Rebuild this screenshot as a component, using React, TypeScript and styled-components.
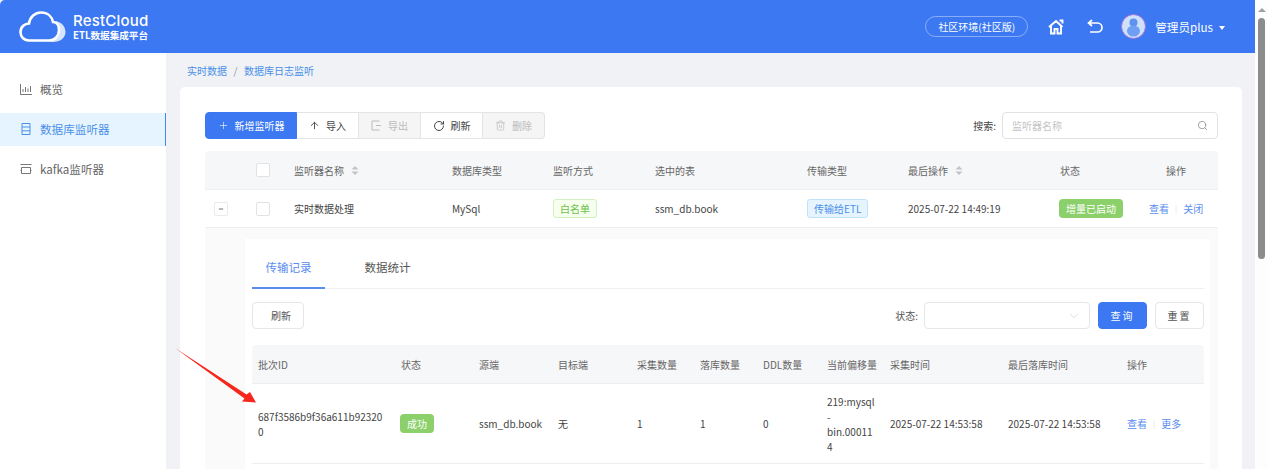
import React from 'react';
import styled, { createGlobalStyle } from 'styled-components';
import { ChevronDown, Minus, Plus, RotateCw, Search, ArrowUp, Trash2 } from 'lucide-react';

const GlobalStyle = createGlobalStyle`
  html, body {
    margin: 0;
    height: 469px;
    overflow: hidden;
    background: #f0f2f5;
    font-family: "Noto Sans CJK SC", "Noto Sans", sans-serif;
    color: #555;
  }
  * { box-sizing: border-box; }
`;

const Page = styled.div`
  display: flex;
  width: 1268px;
  height: 469px;
  overflow: hidden;
`;

const Main = styled.div`
  width: 1255px;
  display: flex;
  flex-direction: column;
`;

const Header = styled.header`
  height: 53px;
  flex: none;
  background: #3b78f2;
  border-top-left-radius: 5px;
  display: flex;
  align-items: center;
  padding: 0 30px 0 19px;
  color: #fff;
`;

const Logo = styled.div`
  display: flex;
  align-items: center;
  gap: 7px;
`;

const LogoText = styled.div`
  display: flex;
  flex-direction: column;
  margin-top: -1px;
`;

const LogoName = styled.div`
  font-family: "Inter", sans-serif;
  font-size: 15px;
  line-height: 18px;
  font-weight: 500;
  letter-spacing: 0.2px;
`;

const LogoSub = styled.div`
  font-size: 9.6px;
  line-height: 11px;
  font-weight: 700;
  white-space: nowrap;
`;

const HeaderRight = styled.div`
  margin-left: auto;
  display: flex;
  align-items: center;
`;

const EnvPill = styled.div`
  width: 103px;
  height: 21px;
  border: 1px solid rgba(255, 255, 255, 0.4);
  border-radius: 11px;
  font-size: 10px;
  line-height: 19px;
  text-align: center;
  margin-right: 20px;
`;

const HomeIcon = styled.svg`
  display: block;
  color: #fff;
  margin-right: 23px;
`;

const BackIcon = styled.svg`
  display: block;
  color: #fff;
  margin-right: 18px;
`;

const Avatar = styled.div`
  width: 25px;
  height: 25px;
  border-radius: 50%;
  border: 1px solid #9a70d8;
  background: #cfe0fb;
  margin: 0 9px 0 0;
  overflow: hidden;
`;

const UserName = styled.span`
  font-size: 11.6px;
  white-space: nowrap;
`;

const Caret = styled.span`
  width: 0;
  height: 0;
  margin-left: 6px;
  margin-top: 2px;
  border-left: 3.5px solid transparent;
  border-right: 3.5px solid transparent;
  border-top: 4px solid #fff;
`;

const Body = styled.div`
  flex: 1;
  display: flex;
  min-height: 0;
`;

const Sidebar = styled.nav`
  width: 166px;
  flex: none;
  background: #fff;
  padding-top: 20px;
`;

const NavItem = styled.div<{ $active?: boolean }>`
  height: 33px;
  margin-bottom: 7px;
  display: flex;
  align-items: center;
  gap: 8px;
  padding: 0 0 2px 20px;
  font-size: 11.6px;
  color: ${(p) => (p.$active ? '#4a90e8' : '#666')};
  background: ${(p) => (p.$active ? '#e6f4ff' : 'transparent')};
  border-right: ${(p) => (p.$active ? '1.5px solid #3f8ce8' : 'none')};
`;

const Content = styled.main`
  flex: 1;
  min-width: 0;
  padding: 0 13px 0 14px;
`;

const Crumbs = styled.div`
  height: 34px;
  display: flex;
  align-items: center;
  font-size: 10px;
  color: #4a90e8;
  padding: 0 0 0 7px;
`;

const CrumbSep = styled.span`
  color: #999;
  margin: 0 6.5px;
`;

const Card = styled.section`
  background: #fff;
  border-radius: 5px 5px 0 0;
  padding: 25px 24px 0 25px;
  height: 400px;
  overflow: hidden;
`;

const Toolbar = styled.div`
  display: flex;
  align-items: center;
  height: 27px;
  margin-bottom: 12px;
`;

const BtnGroup = styled.div`
  display: flex;
  height: 27px;
`;

const GroupBtn = styled.div<{ $kind?: 'primary' | 'off'; $w: number }>`
  width: ${(p) => p.$w}px;
  height: 27px;
  display: flex;
  align-items: center;
  justify-content: center;
  gap: 6px;
  font-size: 10px;
  white-space: nowrap;
  border: 1px solid ${(p) => (p.$kind === 'primary' ? '#3b78f2' : '#e2e4e8')};
  border-left-width: ${(p) => (p.$kind === 'primary' ? '1px' : '0')};
  background: ${(p) => (p.$kind === 'primary' ? '#3b78f2' : p.$kind === 'off' ? '#f5f5f5' : '#fff')};
  color: ${(p) => (p.$kind === 'primary' ? '#fff' : p.$kind === 'off' ? '#bbb' : '#444')};
  &:first-child { border-radius: 4px 0 0 4px; }
  &:last-child { border-radius: 0 4px 4px 0; }
`;

const SearchBox = styled.div`
  margin-left: auto;
  display: flex;
  align-items: center;
  font-size: 10px;
  color: #444;
`;

const SearchInput = styled.div`
  width: 216px;
  height: 27px;
  margin-left: 6px;
  border: 1px solid #e0e2e6;
  border-radius: 4px;
  display: flex;
  align-items: center;
  justify-content: space-between;
  padding: 0 9px;
  color: #c4c4c4;
`;

const Row = styled.div<{ $cols: string; $head?: boolean; $h: number; $inset?: boolean }>`
  display: grid;
  grid-template-columns: ${(p) => p.$cols};
  align-items: center;
  height: ${(p) => p.$h}px;
  padding-left: ${(p) => (p.$inset ? '6px' : '0')};
  font-size: 10px;
  color: ${(p) => (p.$head ? '#666' : '#444')};
  background: ${(p) => (p.$head ? '#f6f7f9' : '#fff')};
  border-bottom: 1px solid #eceef1;
  border-radius: ${(p) => (p.$head ? '4px 4px 0 0' : '0')};
`;

const Cell = styled.div`
  white-space: nowrap;
  display: flex;
  align-items: center;
`;

const CheckCell = styled(Cell)`
  padding-left: 51px;
`;

const ActionCell = styled(Cell)`
  margin-left: -17px;
`;

const WrapCell = styled.div<{ $w: number }>`
  width: ${(p) => p.$w}px;
  overflow-wrap: anywhere;
  line-height: 15px;
`;

const Check = styled.span<{ $gap?: number }>`
  display: block;
  width: 14px;
  height: 14px;
  margin-left: ${(p) => p.$gap ?? 0}px;
  background: #fff;
  border: 1px solid #e0e2e6;
  border-radius: 2px;
`;

const Expander = styled.span`
  display: flex;
  align-items: center;
  justify-content: center;
  width: 14px;
  height: 14px;
  border: 1px solid #e8eaee;
  border-radius: 2px;
  background: #fff;
  margin-left: 9px;
  color: #444;
`;

const SortIcon = styled.svg`
  margin-left: 7px;
  color: #c2c4c8;
`;

const Tag = styled.span<{ $tone: 'green' | 'blue' }>`
  height: 19px;
  padding: 0 6px;
  display: inline-flex;
  align-items: center;
  border-radius: 3px;
  border: 1px solid ${(p) => (p.$tone === 'green' ? '#d3f1c0' : '#bfe2fd')};
  background: ${(p) => (p.$tone === 'green' ? '#f6ffed' : '#e6f4ff')};
  color: ${(p) => (p.$tone === 'green' ? '#6cc04a' : '#4a90e8')};
`;

const Badge = styled.span`
  height: 19px;
  margin-left: -1px;
  padding: 0 7px;
  display: inline-flex;
  align-items: center;
  border-radius: 4px;
  background: #8bd06a;
  color: #fff;
`;

const Link = styled.span`
  color: #5a8df0;
`;

const LinkSep = styled.span`
  color: #e2e2e2;
  margin: 0 6px;
  font-size: 8px;
`;

const Expanded = styled.div`
  background: #fafafa;
  padding: 11px 8px 0 40px;
  height: 260px;
`;

const Inner = styled.div`
  background: #fff;
  height: 240px;
  padding: 0 6px 0 7px;
`;

const Tabs = styled.div`
  display: flex;
  height: 50px;
  border-bottom: 1px solid #eeeff2;
  margin: 0 0 13px 0;
`;

const Tab = styled.div<{ $on?: boolean }>`
  width: 73px;
  margin-right: 26px;
  text-align: center;
  line-height: 57px;
  height: 50px;
  font-size: 11.5px;
  color: ${(p) => (p.$on ? '#5a8df0' : '#555')};
  border-bottom: ${(p) => (p.$on ? '2px solid #5a8df0' : 'none')};
`;

const FilterBar = styled.div`
  display: flex;
  align-items: center;
  height: 27px;
  margin-bottom: 16px;
`;

const PlainBtn = styled.div<{ $w: number }>`
  width: ${(p) => p.$w}px;
  height: 27px;
  border: 1px solid #e4e6ea;
  border-radius: 4px;
  display: flex;
  align-items: center;
  justify-content: center;
  padding-left: ${(p) => (p.$w < 50 ? '0' : '6px')};
  font-size: 10px;
  color: #555;
  letter-spacing: ${(p) => (p.$w < 50 ? '2px' : '0')};
`;

const PrimaryBtn = styled(PlainBtn)`
  background: #3b78f2;
  border-color: #3b78f2;
  color: #fff;
  margin: 0 8px;
`;

const FilterLabel = styled.span`
  margin-left: auto;
  font-size: 10px;
  color: #555;
  margin-right: 6px;
`;

const SelectBox = styled.div`
  width: 166px;
  height: 27px;
  border: 1px solid #e4e6ea;
  border-radius: 4px;
  display: flex;
  align-items: center;
  justify-content: flex-end;
  padding-right: 8px;
  color: #c4c4c4;
`;

const Scrollbar = styled.div`
  width: 13px;
  flex: none;
  background: #fdfdfd;
  padding: 6px 2px 0;
`;

const ScrollUp = styled.div`
  width: 0;
  height: 0;
  margin: 2px auto 6px;
  border-left: 4px solid transparent;
  border-right: 4px solid transparent;
  border-bottom: 4px solid #a0a0a0;
`;

const ScrollThumb = styled.div`
  width: 7px;
  height: 241px;
  margin: 0 auto;
  border-radius: 4px;
  background: #8c8c8c;
`;

const Arrow = styled.svg`
  position: absolute;
  left: 172px;
  top: 345px;
`;

const Root = styled.div`
  position: relative;
`;

const topCols = '89px 158px 101px 102px 152px 101px 152px 106px 52px';
const subCols = '143px 78px 79px 79px 63px 63px 64px 63px 118px 119px 1fr';

const Sort = () => (
  <SortIcon width="8" height="11" viewBox="0 0 8 11">
    <path d="M4 1 7.5 4.5H.5zM4 10 .5 6.5h7z" fill="currentColor" />
  </SortIcon>
);

export default function App() {
  return (
    <Root>
      <GlobalStyle />
      <Page>
        <Main>
          <Header>
            <Logo>
              <svg width="47" height="32" viewBox="0 0 47 32" fill="none">
                <path d="M36 10C43 11 46.500 16 46.500 21C46.500 27 41 31 34 31L30 31C37 30 41 25 41 19C41 15 39 12 36 10Z" fill="rgba(255,255,255,.8)" />
                <path d="M10 29.500C4.500 29.500 1.500 25.500 1.500 21C1.500 15.500 6 12.500 10 12.500C11 6 16 1.500 22 1.500C29 1.500 33 6 34 11C38 11 40 15 40 19C40 25 36 29.500 30 29.500Z" fill="#3b78f2" stroke="#fff" strokeWidth="2.6" />
              </svg>
              <LogoText>
                <LogoName>RestCloud</LogoName>
                <LogoSub>ETL数据集成平台</LogoSub>
              </LogoText>
            </Logo>
            <HeaderRight>
              <EnvPill>社区环境(社区版)</EnvPill>
              <HomeIcon width="16" height="16" viewBox="0 0 16 16" fill="none" stroke="currentColor" strokeWidth="1.9">
                <path d="M1 8 8 2l6.500 6M3 7v7.500h3.500V10h3v4.500H13V7M11.500 1.500h3v3" />
              </HomeIcon>
              <BackIcon width="16" height="15" viewBox="0 0 16 15" fill="none" stroke="currentColor" strokeWidth="1.7">
                <path d="M5 1 1.500 4 5 7M2 4h8.500a4.300 4.300 0 0 1 0 9H3" />
              </BackIcon>
              <Avatar>
                <svg width="23" height="23" viewBox="0 0 23 23">
                  <circle cx="11.500" cy="7.500" r="4" fill="#5d93ee" />
                  <ellipse cx="11.500" cy="16" rx="6.500" ry="5.500" fill="#6f9ff2" />
                </svg>
              </Avatar>
              <UserName>管理员plus</UserName>
              <Caret />
            </HeaderRight>
          </Header>
          <Body>
            <Sidebar>
              <NavItem>
                <svg width="12" height="12" viewBox="0 0 12 12" fill="none" stroke="#777" strokeWidth="1">
                  <path d="M.5 1v10.500H12M3 9V6M5.500 9V4M8 9V5.500M10.500 9V3" />
                </svg>
                概览
              </NavItem>
              <NavItem $active>
                <svg width="12" height="12" viewBox="0 0 12 12" fill="none" stroke="#4a90e8" strokeWidth="1">
                  <path d="M2 .5h8v11H2zM2 4h8M2 7.800h8" />
                </svg>
                数据库监听器
              </NavItem>
              <NavItem>
                <svg width="12" height="12" viewBox="0 0 12 12" fill="none" stroke="#777" strokeWidth="1">
                  <path d="M.5 1.500h11M1.500 4.500h9v6h-9zM.5 7.500h1M10.500 7.500h1" />
                </svg>
                kafka监听器
              </NavItem>
            </Sidebar>
            <Content>
              <Crumbs>
                实时数据<CrumbSep>/</CrumbSep>数据库日志监听
              </Crumbs>
              <Card>
                <Toolbar>
                  <BtnGroup>
                    <GroupBtn $kind="primary" $w={92}><Plus size={11} strokeWidth={1.3} />新增监听器</GroupBtn>
                    <GroupBtn $w={62}><ArrowUp size={11} />导入</GroupBtn>
                    <GroupBtn $kind="off" $w={62}>
                      <svg width="11" height="11" viewBox="0 0 11 11" fill="none" stroke="currentColor" strokeWidth="1">
                        <path d="M8.500 1H1v9h7.500M5 5.500h5" />
                      </svg>
                      导出
                    </GroupBtn>
                    <GroupBtn $w={62}><RotateCw size={12} />刷新</GroupBtn>
                    <GroupBtn $kind="off" $w={62}><Trash2 size={11} strokeWidth={1.5} />删除</GroupBtn>
                  </BtnGroup>
                  <SearchBox>
                    搜索:
                    <SearchInput>
                      监听器名称
                      <Search size={11} color="#999" />
                    </SearchInput>
                  </SearchBox>
                </Toolbar>
                <Row $cols={topCols} $head $h={39}>
                  <CheckCell><Check /></CheckCell>
                  <Cell>监听器名称<Sort /></Cell>
                  <Cell>数据库类型</Cell>
                  <Cell>监听方式</Cell>
                  <Cell>选中的表</Cell>
                  <Cell>传输类型</Cell>
                  <Cell>最后操作<Sort /></Cell>
                  <Cell>状态</Cell>
                  <Cell>操作</Cell>
                </Row>
                <Row $cols={topCols} $h={38}>
                  <Cell>
                    <Expander><Minus size={6} strokeWidth={3} /></Expander>
                    <Check $gap={28} />
                  </Cell>
                  <Cell>实时数据处理</Cell>
                  <Cell>MySql</Cell>
                  <Cell><Tag $tone="green">白名单</Tag></Cell>
                  <Cell>ssm_db.book</Cell>
                  <Cell><Tag $tone="blue">传输给ETL</Tag></Cell>
                  <Cell>2025-07-22 14:49:19</Cell>
                  <Cell><Badge>增量已启动</Badge></Cell>
                  <ActionCell><Link>查看</Link><LinkSep>|</LinkSep><Link>关闭</Link></ActionCell>
                </Row>
                <Expanded>
                  <Inner>
                    <Tabs>
                      <Tab $on>传输记录</Tab>
                      <Tab>数据统计</Tab>
                    </Tabs>
                    <FilterBar>
                      <PlainBtn $w={52}>刷新</PlainBtn>
                      <FilterLabel>状态:</FilterLabel>
                      <SelectBox><ChevronDown size={14} strokeWidth={1} /></SelectBox>
                      <PrimaryBtn $w={49}>查询</PrimaryBtn>
                      <PlainBtn $w={49}>重置</PlainBtn>
                    </FilterBar>
                    <Row $cols={subCols} $head $inset $h={39}>
                      <Cell>批次ID</Cell>
                      <Cell>状态</Cell>
                      <Cell>源端</Cell>
                      <Cell>目标端</Cell>
                      <Cell>采集数量</Cell>
                      <Cell>落库数量</Cell>
                      <Cell>DDL数量</Cell>
                      <Cell>当前偏移量</Cell>
                      <Cell>采集时间</Cell>
                      <Cell>最后落库时间</Cell>
                      <Cell>操作</Cell>
                    </Row>
                    <Row $cols={subCols} $inset $h={80}>
                      <WrapCell $w={125}>687f3586b9f36a611b923200</WrapCell>
                      <Cell><Badge>成功</Badge></Cell>
                      <Cell>ssm_db.book</Cell>
                      <Cell>无</Cell>
                      <Cell>1</Cell>
                      <Cell>1</Cell>
                      <Cell>0</Cell>
                      <WrapCell $w={50}>219:mysql-bin.000114</WrapCell>
                      <Cell>2025-07-22 14:53:58</Cell>
                      <Cell>2025-07-22 14:53:58</Cell>
                      <Cell><Link>查看</Link><LinkSep>|</LinkSep><Link>更多</Link></Cell>
                    </Row>
                  </Inner>
                </Expanded>
              </Card>
            </Content>
          </Body>
        </Main>
        <Scrollbar>
          <ScrollUp />
          <ScrollThumb />
        </Scrollbar>
      </Page>
      <Arrow width="86" height="60" viewBox="0 0 86 60">
        <path d="M3 3 74.500 49.500 78 47 84 57.500 70 56.500 72.500 53.500Z" fill="#f5261c" />
      </Arrow>
    </Root>
  );
}
